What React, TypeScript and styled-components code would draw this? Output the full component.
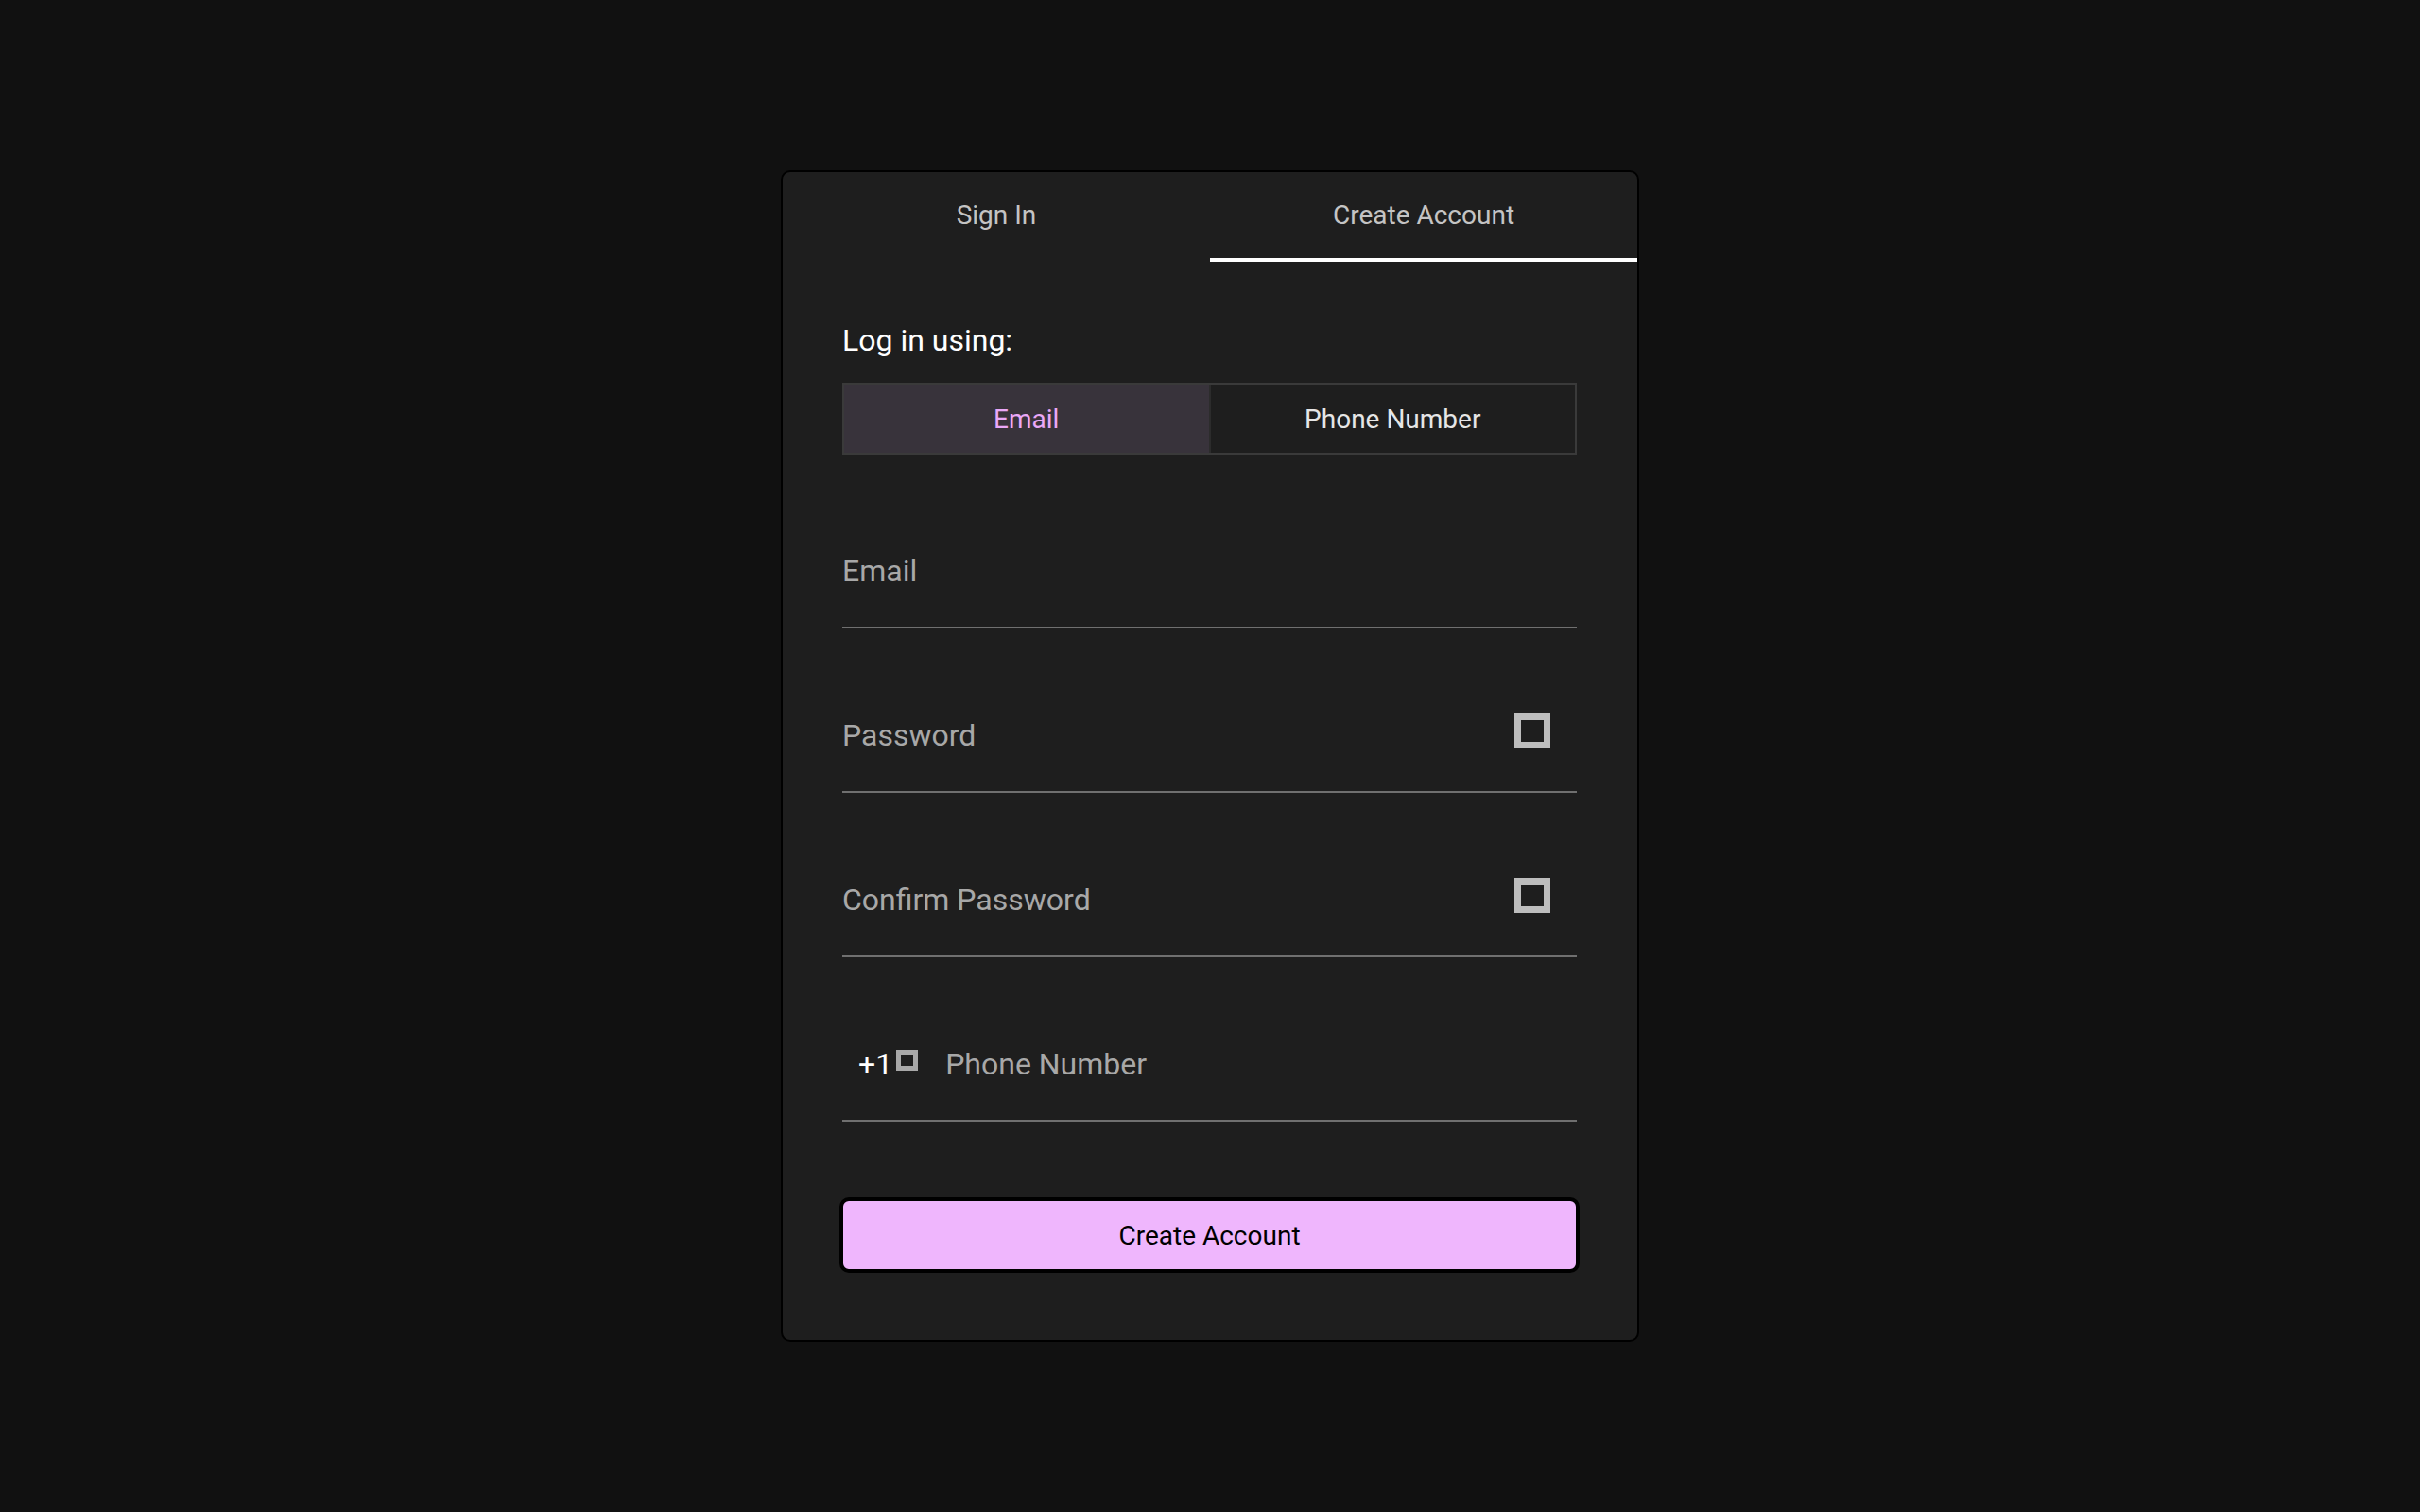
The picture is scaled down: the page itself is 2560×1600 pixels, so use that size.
import React, { useState } from 'react';
import styled, { createGlobalStyle } from 'styled-components';

const GlobalStyle = createGlobalStyle`
  html, body {
    margin: 0;
    padding: 0;
    background: #111111;
    font-family: Roboto, "Liberation Sans", sans-serif;
  }
  * {
    box-sizing: border-box;
  }
`;

const Page = styled.main`
  min-height: 100vh;
  display: flex;
  align-items: center;
  justify-content: center;
`;

const Card = styled.section`
  width: 908px;
  background: #1e1e1e;
  border: 2px solid #000;
  border-radius: 10px;
  overflow: hidden;
`;

const Tabs = styled.nav`
  display: flex;
`;

const Tab = styled.button<{ $active?: boolean }>`
  flex: 1;
  height: 95px;
  background: none;
  border: none;
  border-bottom: 4px solid ${({ $active }) => ($active ? '#ffffff' : 'transparent')};
  color: #c4c4c4;
  font-family: inherit;
  font-size: 28px;
  cursor: pointer;
  padding: 0;
`;

const Body = styled.div`
  display: flex;
  flex-direction: column;
  padding: 64px 64px 71px 63px;
`;

const Label = styled.div`
  color: #ffffff;
  font-size: 32px;
  line-height: 38px;
  margin-bottom: 26px;
`;

const Segmented = styled.div`
  display: flex;
  height: 76px;
  border: 2px solid #3a3a3a;
`;

const Segment = styled.button<{ $selected?: boolean }>`
  flex: 1;
  border: none;
  border-left: ${({ $selected }) => ($selected ? 'none' : '2px solid #2c2c2c')};
  background: ${({ $selected }) => ($selected ? '#38333b' : '#1e1e1e')};
  color: ${({ $selected }) => ($selected ? '#eaa8f7' : '#e6e6e6')};
  font-family: inherit;
  font-size: 28px;
  cursor: pointer;
`;

const FieldList = styled.div`
  display: flex;
  flex-direction: column;
  gap: 54px;
  margin-top: 64px;
`;

const Field = styled.label`
  display: flex;
  align-items: center;
  height: 120px;
  border-bottom: 2px solid #707070;
`;

const Input = styled.input`
  flex: 1;
  min-width: 0;
  background: transparent;
  border: none;
  outline: none;
  padding: 0;
  color: #ffffff;
  font-family: inherit;
  font-size: 32px;
  line-height: 38px;

  &::placeholder {
    color: #a8a8a8;
  }
`;

/* missing icon-font glyphs render as empty boxes */
const EyeGlyph = styled.span`
  width: 38px;
  height: 37px;
  border: 7px solid #bdbdbd;
  margin-right: 28px;
  margin-top: -9px;
`;

const Prefix = styled.span`
  display: flex;
  align-items: center;
  padding-left: 17px;
  margin-right: 29px;
  color: #ffffff;
  font-size: 32px;
`;

const CaretGlyph = styled.span`
  width: 23px;
  height: 22px;
  border: 5px solid #a8a8a8;
  margin-left: 4px;
  margin-top: -8px;
`;

const Submit = styled.button`
  margin: 80px -3px 0 -3px;
  height: 80px;
  background: #efb6fd;
  border: 4px solid #000;
  border-radius: 10px;
  color: #000;
  font-family: inherit;
  font-size: 28px;
  cursor: pointer;
`;

export default function App() {
  const [tab, setTab] = useState<'signin' | 'create'>('create');
  const [method, setMethod] = useState<'email' | 'phone'>('email');

  return (
    <Page>
      <GlobalStyle />
      <Card>
        <Tabs>
          <Tab $active={tab === 'signin'} onClick={() => setTab('signin')}>
            Sign In
          </Tab>
          <Tab $active={tab === 'create'} onClick={() => setTab('create')}>
            Create Account
          </Tab>
        </Tabs>
        <Body>
          <Label>Log in using:</Label>
          <Segmented>
            <Segment $selected={method === 'email'} onClick={() => setMethod('email')}>
              Email
            </Segment>
            <Segment $selected={method === 'phone'} onClick={() => setMethod('phone')}>
              Phone Number
            </Segment>
          </Segmented>
          <FieldList>
            <Field>
              <Input type="email" placeholder="Email" />
            </Field>
            <Field>
              <Input type="password" placeholder="Password" />
              <EyeGlyph />
            </Field>
            <Field>
              <Input type="password" placeholder="Confirm Password" />
              <EyeGlyph />
            </Field>
            <Field>
              <Prefix>
                +1
                <CaretGlyph />
              </Prefix>
              <Input type="tel" placeholder="Phone Number" />
            </Field>
          </FieldList>
          <Submit>Create Account</Submit>
        </Body>
      </Card>
    </Page>
  );
}
